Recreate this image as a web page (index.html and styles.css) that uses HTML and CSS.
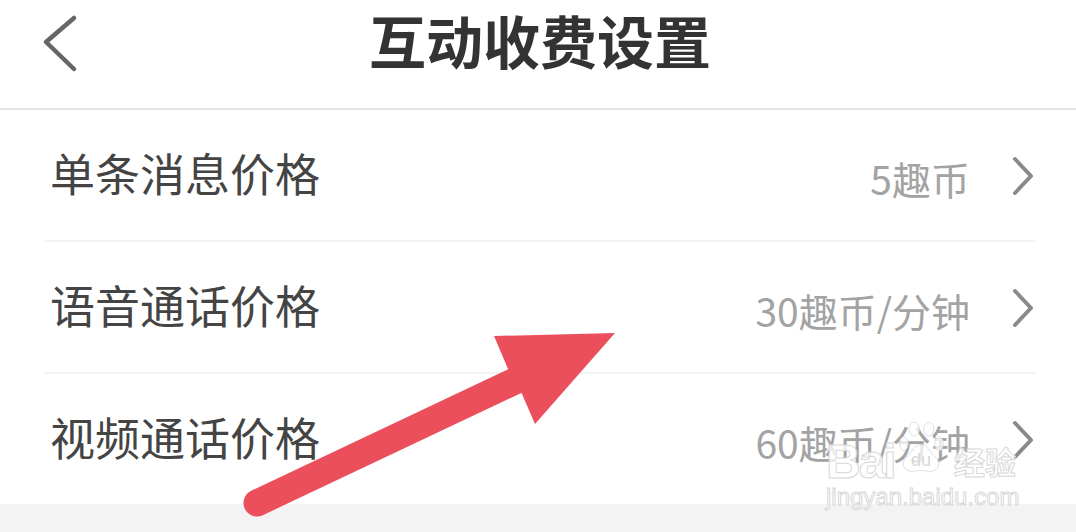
FILE: index.html
```html
<!DOCTYPE html>
<html lang="zh-CN">
<head>
  <meta charset="UTF-8" />
  <meta name="viewport" content="width=device-width, initial-scale=1.0"/>
  <title>互动收费设置</title>
  <link rel="stylesheet" href="styles.css">
</head>
<body>
  <div class="screen">
    <header class="topbar">
      <svg class="back" width="40" height="60" viewBox="0 0 40 60">
        <path d="M33 5 L5 29 L33 56" />
      </svg>
      <h1>互动收费设置</h1>
    </header>

    <ul class="list">
      <li class="row">
        <span class="label">单条消息价格</span>
        <span class="value">5趣币</span>
        <svg class="chevron" width="24" height="40" viewBox="0 0 24 40"><path d="M4 3 L20 20 L4 37" /></svg>
      </li>
      <li class="row">
        <span class="label">语音通话价格</span>
        <span class="value">30趣币/分钟</span>
        <svg class="chevron" width="24" height="40" viewBox="0 0 24 40"><path d="M4 3 L20 20 L4 37" /></svg>
      </li>
      <li class="row">
        <span class="label">视频通话价格</span>
        <span class="value">60趣币/分钟</span>
        <svg class="chevron" width="24" height="40" viewBox="0 0 24 40"><path d="M4 3 L20 20 L4 37" /></svg>
      </li>
    </ul>

    <div class="footer-band"></div>

    <!-- red arrow drawn on top of the screenshot -->
    <svg class="arrow" width="1076" height="532" viewBox="0 0 1076 532">
      <path class="arrow-shaft" d="M257 503 L515 381" />
      <path class="arrow-head" d="M615 333 L494 336 L508 369 L522 394 L535 424 Z" />
    </svg>

    <!-- watermark -->
    <div class="watermark">
      <div class="wm-top">
        <span class="wm-bai">Bai</span>
        <svg class="wm-paw" width="48" height="62" viewBox="0 0 56 62">
          <ellipse cx="8" cy="26" rx="5" ry="8" />
          <ellipse cx="20" cy="9" rx="6" ry="8" />
          <ellipse cx="37" cy="9" rx="6" ry="8" />
          <ellipse cx="49" cy="26" rx="5" ry="8" />
          <path d="M28 27 C20 27 18 36 11 42 C3 49 9 60 20 58 C25 57 31 57 36 58 C47 60 53 49 45 42 C38 36 36 27 28 27 Z" />
          <text x="28" y="52" text-anchor="middle">du</text>
        </svg>
        <span class="wm-jy">经验</span>
      </div>
      <div class="wm-url">jingyan.baidu.com</div>
    </div>
  </div>
</body>
</html>
```

FILE: styles.css
```css
* {
  box-sizing: border-box;
}

html,
body {
  margin: 0;
  padding: 0;
  background-color: #fff;
}

body {
  font-family: "Noto Sans CJK SC", "Noto Sans", sans-serif;
}

.screen {
  position: relative;
  width: 1076px;
  height: 532px;
  overflow: hidden;
  display: flex;
  flex-direction: column;
  background-color: #fff;
}

.topbar {
  height: 110px;
  flex: none;
  display: flex;
  align-items: center;
  justify-content: center;
  position: relative;
  border-bottom: 2px solid #e4e4e4;
}

.topbar h1 {
  margin: 0 0 30px;
  font-size: 57px;
  line-height: 70px;
  font-weight: 700;
  color: #333;
  transform: translateX(2px);
}

.back {
  position: absolute;
  left: 41px;
  top: 13px;
}

.back path {
  fill: none;
  stroke: #666;
  stroke-width: 4.5;
  stroke-linecap: round;
  stroke-linejoin: round;
}

.list {
  list-style: none;
  margin: 0;
  padding: 0 40px 0 44px;
  flex: none;
}

.row {
  height: 132px;
  display: flex;
  align-items: center;
  border-bottom: 2px solid #f3f3f3;
  padding: 0 0 0 6px;
}

.row:last-child {
  height: 130px;
  border-bottom: none;
}

.label {
  font-size: 45px;
  line-height: 60px;
  color: #444;
  margin-top: -4px;
}

.value {
  margin-left: auto;
  font-size: 39px;
  line-height: 48px;
  color: #a3a3a3;
  margin-top: 5px;
}

.chevron {
  margin-left: 41px;
  margin-right: 1px;
  margin-top: 2px;
}

.chevron path {
  fill: none;
  stroke: #8a8a8a;
  stroke-width: 4;
  stroke-linecap: round;
  stroke-linejoin: round;
}

.footer-band {
  flex: 1;
  background-color: #f3f3f3;
}

.arrow {
  position: absolute;
  left: 0;
  top: 0;
}

.arrow-shaft {
  fill: none;
  stroke: #ec4f5c;
  stroke-width: 27;
  stroke-linecap: round;
}

.arrow-head {
  fill: #ec4f5c;
}

.watermark {
  position: absolute;
  left: 826px;
  top: 417px;
  width: 195px;
}

.wm-top {
  display: flex;
  align-items: flex-end;
  height: 62px;
}

.wm-bai {
  font-family: "Liberation Sans", sans-serif;
  font-size: 48px;
  line-height: 34px;
  font-weight: 700;
  letter-spacing: -2px;
  -webkit-text-stroke: 1px #d8d8d8;
  color: rgba(255, 255, 255, 0.8);
  width: 71px;
}

.wm-paw {
  flex: none;
}

.wm-paw ellipse,
.wm-paw path {
  fill: rgba(255, 255, 255, 0.75);
  stroke: #d8d8d8;
  stroke-width: 1;
}

.wm-paw text {
  font-family: "Liberation Sans", sans-serif;
  font-size: 21px;
  fill: #d8d8d8;
}

.wm-jy {
  font-size: 31px;
  line-height: 36px;
  font-weight: 700;
  -webkit-text-stroke: 1px #d8d8d8;
  color: rgba(255, 255, 255, 0.8);
  margin-left: 9px;
  white-space: nowrap;
}

.wm-url {
  font-family: "Liberation Sans", sans-serif;
  font-size: 24px;
  line-height: 28px;
  margin-top: 4px;
  -webkit-text-stroke: 1px #d8d8d8;
  color: rgba(255, 255, 255, 0.8);
  white-space: nowrap;
}
```
